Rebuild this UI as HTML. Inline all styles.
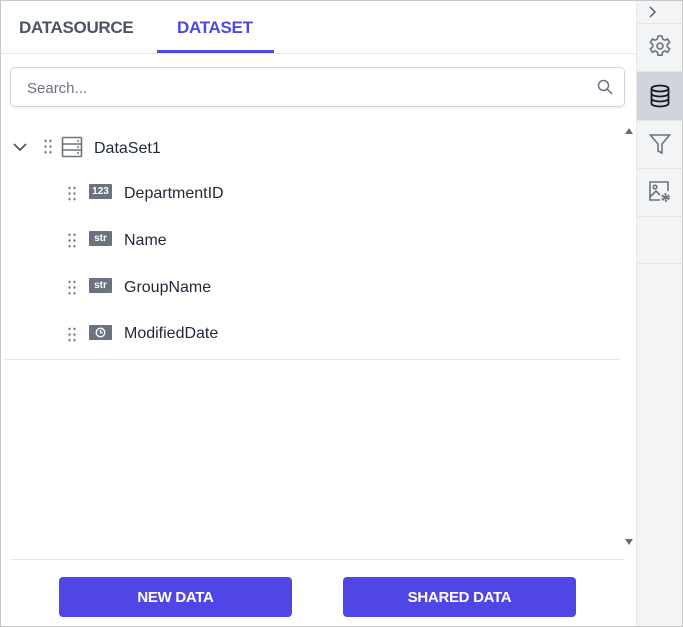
<!DOCTYPE html>
<html><head><style>
*{box-sizing:border-box;margin:0;padding:0}
body{width:683px;height:627px;background:#fff;font-family:"Liberation Sans",sans-serif;position:relative;overflow:hidden}
.frame{position:absolute;inset:0;border:1px solid #c8c8c8}
.tab{position:absolute;top:18px;font-size:17px;font-weight:bold;letter-spacing:-0.3px}
.side{position:absolute;left:636px;top:1px;width:46px;height:625px;background:#f3f4f6;border-left:1px solid #e5e7eb}
.sep{position:absolute;left:0;width:46px;height:1px;background:#e2e4e8}
.row{position:absolute;font-size:16px;color:#1f2937}
.grip{position:absolute;width:10px;height:17px;background-image:radial-gradient(circle,#6b7280 1.1px,transparent 1.3px);background-size:5px 5.7px}
.badge{position:absolute;width:23px;height:15px;background:#6b7280;color:#fff;font-size:10px;font-weight:bold;text-align:center;line-height:15px;border-radius:1px}
.btn{position:absolute;top:577px;width:233px;height:40px;background:#5046e5;border-radius:4px;color:#fff;font-weight:bold;font-size:15px;text-align:center;line-height:42px;letter-spacing:-0.3px}
</style></head><body>
<div class="frame"></div>
<div class="tab" style="left:19px;color:#4b5563">DATASOURCE</div>
<div class="tab" style="left:177px;color:#5046e5">DATASET</div>
<div style="position:absolute;left:157px;top:50px;width:117px;height:3px;background:#5046e5"></div>
<div style="position:absolute;left:1px;top:53px;width:635px;height:1px;background:#e5e7eb"></div>
<div style="position:absolute;left:10px;top:67px;width:615px;height:40px;border:1px solid #d1d5db;border-radius:5px;box-shadow:0 1px 2px rgba(0,0,0,.08)"></div>
<div style="position:absolute;left:27px;top:80px;font-size:15px;color:#6b7280">Search...</div>
<svg style="position:absolute;left:597px;top:79px" width="16" height="16" viewBox="0 0 16 16" fill="none" stroke="#6b7280" stroke-width="1.5"><circle cx="6.5" cy="6.5" r="5"/><path d="M10.2 10.2L15 15"/></svg>
<svg style="position:absolute;left:12px;top:141px" width="16" height="12" viewBox="0 0 16 12" fill="none" stroke="#4b5563" stroke-width="1.8"><path d="M2 3l6 6 6-6"/></svg>
<div class="grip" style="left:43px;top:138px"></div>
<svg style="position:absolute;left:61px;top:136px" width="22" height="22" viewBox="0 0 22 22" fill="none" stroke="#6b7280" stroke-width="1.6"><rect x="1.5" y="1.5" width="19" height="19" rx="1"/><path d="M1.5 8h19M1.5 14h19"/><path d="M16 5h2M16 11h2M16 17h2"/></svg>
<div class="row" style="left:94px;top:140px">DataSet1</div>
<div class="grip" style="left:67px;top:185px"></div><div class="badge" style="left:89px;top:184px">123</div><div class="row" style="left:124px;top:185px">DepartmentID</div>
<div class="grip" style="left:67px;top:232px"></div><div class="badge" style="left:89px;top:231px">str</div><div class="row" style="left:124px;top:232px">Name</div>
<div class="grip" style="left:67px;top:279px"></div><div class="badge" style="left:89px;top:278px">str</div><div class="row" style="left:124px;top:279px">GroupName</div>
<div class="grip" style="left:67px;top:326px"></div><div class="badge" style="left:89px;top:325px"><svg width="11" height="11" viewBox="0 0 11 11" style="margin-top:2px" fill="none" stroke="#fff" stroke-width="1.4"><circle cx="5.5" cy="5.5" r="4.3"/><path d="M5.5 3v2.7h2"/></svg></div><div class="row" style="left:124px;top:325px">ModifiedDate</div>
<div style="position:absolute;left:4px;top:359px;width:616px;height:1px;background:#e5e7eb"></div>
<div style="position:absolute;left:625px;top:128px;width:0;height:0;border-left:4px solid transparent;border-right:4px solid transparent;border-bottom:6px solid #6b6b6b"></div>
<div style="position:absolute;left:625px;top:539px;width:0;height:0;border-left:4px solid transparent;border-right:4px solid transparent;border-top:6px solid #6b6b6b"></div>
<div style="position:absolute;left:10px;top:559px;width:615px;height:1px;background:#e5e7eb"></div>
<div class="btn" style="left:59px">NEW DATA</div>
<div class="btn" style="left:343px">SHARED DATA</div>
<div class="side">
<svg style="position:absolute;left:9px;top:5px" width="12" height="12" viewBox="0 0 12 12" fill="none" stroke="#4b5563" stroke-width="1.4"><path d="M4 1l5 5-5 5"/></svg>
<div class="sep" style="top:22px"></div>
<svg style="position:absolute;left:11px;top:33px" width="24" height="24" viewBox="0 0 24 24" fill="none" stroke="#6b7280" stroke-width="1.6"><path d="M10 2h4l.6 3 2.2 1.2 2.8-1.2 2 3.4-2.3 2v2.4l2.3 2-2 3.4-2.8-1.2-2.2 1.2-.6 3h-4l-.6-3-2.2-1.2-2.8 1.2-2-3.4 2.3-2v-2.4l-2.3-2 2-3.4 2.8 1.2L9.4 5z"/><circle cx="12" cy="12" r="3"/></svg>
<div style="position:absolute;left:0;top:71px;width:46px;height:48px;background:#d1d5db"></div>
<div class="sep" style="top:70px"></div>
<svg style="position:absolute;left:12px;top:83px" width="22" height="24" viewBox="0 0 22 24" fill="none" stroke="#111827" stroke-width="1.8"><ellipse cx="11" cy="4.5" rx="8.5" ry="3"/><path d="M2.5 4.5v15c0 1.7 3.8 3 8.5 3s8.5-1.3 8.5-3v-15M2.5 9.5c0 1.7 3.8 3 8.5 3s8.5-1.3 8.5-3M2.5 14.5c0 1.7 3.8 3 8.5 3s8.5-1.3 8.5-3"/></svg>
<div class="sep" style="top:119px"></div>
<svg style="position:absolute;left:12px;top:132px" width="22" height="22" viewBox="0 0 22 22" fill="none" stroke="#6b7280" stroke-width="1.6"><path d="M1.5 2h19l-7.5 9v9l-4-2v-7z"/></svg>
<div class="sep" style="top:167px"></div>
<svg style="position:absolute;left:11px;top:179px" width="24" height="24" viewBox="0 0 24 24" fill="none" stroke="#6b7280" stroke-width="1.6"><path d="M12 20H2V2h18v9"/><circle cx="7" cy="7" r="1.8"/><path d="M2 17l6-6 4 4"/><circle cx="17.5" cy="17.5" r="3" stroke-width="2.6" stroke-dasharray="2 1.2"/><circle cx="17.5" cy="17.5" r="1" fill="#6b7280"/></svg>
<div class="sep" style="top:215px"></div>
<div class="sep" style="top:262px"></div>
</div>
</body></html>
